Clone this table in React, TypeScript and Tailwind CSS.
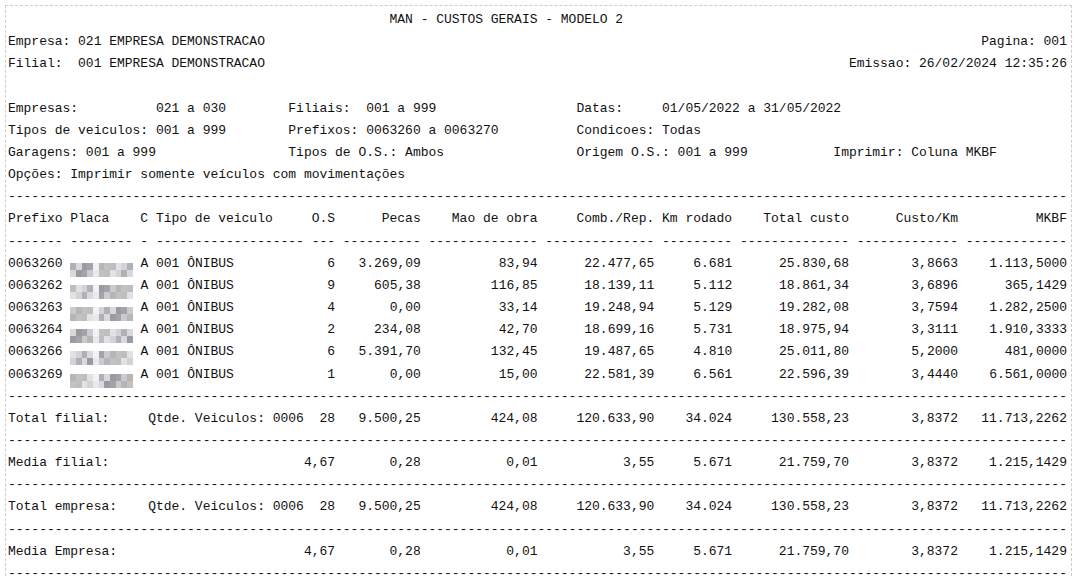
import React from 'react';

const W = 136;

const sp = (n: number) => ' '.repeat(Math.max(0, n));
const lpad = (s: string, n: number) => sp(n - s.length) + s;
const rpad = (s: string, n: number) => s + sp(n - s.length);
const dash = (n: number) => '-'.repeat(n);

// columns after O.S: pecas, mao de obra, comb./rep., km rodado, total custo, custo/km, mkbf
const rest = (v: string[]) =>
  ' ' + lpad(v[0], 10) +
  ' ' + lpad(v[1], 14) +
  ' ' + lpad(v[2], 14) +
  ' ' + lpad(v[3], 9) +
  ' ' + lpad(v[4], 14) +
  ' ' + lpad(v[5], 13) +
  ' ' + lpad(v[6], 13);

const header =
  rpad('Prefixo', 7) + ' ' + rpad('Placa', 8) + ' C ' + rpad('Tipo de veiculo', 19) + ' ' + lpad('O.S', 3) +
  rest(['Pecas', 'Mao de obra', 'Comb./Rep.', 'Km rodado', 'Total custo', 'Custo/Km', 'MKBF']);

const underline =
  dash(7) + ' ' + dash(8) + ' ' + dash(1) + ' ' + dash(19) + ' ' + dash(3) + ' ' + dash(10) + ' ' + dash(14) + ' ' +
  dash(14) + ' ' + dash(9) + ' ' + dash(14) + ' ' + dash(13) + ' ' + dash(13);

const rows = [
  { prefixo: '0063260', os: '6', v: ['3.269,09', '83,94', '22.477,65', '6.681', '25.830,68', '3,8663', '1.113,5000'] },
  { prefixo: '0063262', os: '9', v: ['605,38', '116,85', '18.139,11', '5.112', '18.861,34', '3,6896', '365,1429'] },
  { prefixo: '0063263', os: '4', v: ['0,00', '33,14', '19.248,94', '5.129', '19.282,08', '3,7594', '1.282,2500'] },
  { prefixo: '0063264', os: '2', v: ['234,08', '42,70', '18.699,16', '5.731', '18.975,94', '3,3111', '1.910,3333'] },
  { prefixo: '0063266', os: '6', v: ['5.391,70', '132,45', '19.487,65', '4.810', '25.011,80', '5,2000', '481,0000'] },
  { prefixo: '0063269', os: '1', v: ['0,00', '15,00', '22.581,39', '6.561', '22.596,39', '3,4440', '6.561,0000'] },
];

const totalVals = ['9.500,25', '424,08', '120.633,90', '34.024', '130.558,23', '3,8372', '11.713,2262'];
const mediaVals = ['0,28', '0,01', '3,55', '5.671', '21.759,70', '3,8372', '1.215,1429'];

const shades = ['#d9d9db', '#cbcbcf', '#bdbdc2', '#b0b0b6', '#a3a3aa', '#c4c2c0', '#d4d2d6', '#9a9aa2', '#b8b6b4', '#e2e2e4'];

// pixelated plate, like the blurred placeholder in the printout
function Mosaic({ seed }: { seed: number }) {
  const cells: string[] = [];
  let s = seed * 7919 + 104729;
  for (let i = 0; i < 22; i++) {
    s = (s * 9301 + 49297) % 233280;
    const col = i % 11;
    if (col === 4) {
      cells.push(i < 11 ? '#f2f2f3' : '#e9e9eb');
      continue;
    }
    cells.push(shades[s % shades.length]);
  }
  return (
    <span className="inline-grid w-[62.4px] h-[14px] grid-cols-[repeat(11,1fr)] grid-rows-2 align-[-3px] blur-[0.4px]">
      {cells.map((c, i) => (
        <span key={i} className="block" style={{ backgroundColor: c }} />
      ))}
    </span>
  );
}

function Line({ children }: { children?: React.ReactNode }) {
  return <div className="h-[22.17px] whitespace-pre">{children}</div>;
}

export default function App() {
  const params = [
    rpad(rpad('Empresas:', 19) + '021 a 030', 36) + rpad('Filiais:  001 a 999', 37) + 'Datas:     01/05/2022 a 31/05/2022',
    rpad('Tipos de veiculos: 001 a 999', 36) + rpad('Prefixos: 0063260 a 0063270', 37) + 'Condicoes: Todas',
    rpad('Garagens: 001 a 999', 36) + rpad('Tipos de O.S.: Ambos', 37) + rpad('Origem O.S.: 001 a 999', 33) + 'Imprimir: Coluna MKBF',
    'Opções: Imprimir somente veículos com movimentações',
  ];

  const totalLine = (label: string) => rpad(label, 18) + 'Qtde. Veiculos: 0006' + ' ' + lpad('28', 3) + rest(totalVals);
  const mediaLine = (label: string) => rpad(label, 38) + '4,67' + rest(mediaVals);

  return (
    <div className="min-h-screen bg-white">
      <div className="mx-[5px] mt-[5px] border border-dashed border-[#cccccc] pl-[2px] pt-[3px] text-[13px] leading-[22.17px] tracking-[-0.015px] text-[#111111] font-['Liberation_Mono','Courier_New',monospace]">
        <Line>{sp(49) + 'MAN - CUSTOS GERAIS - MODELO 2'}</Line>
        <Line>{'Empresa: 021 EMPRESA DEMONSTRACAO' + lpad('Pagina: 001', W - 33)}</Line>
        <Line>{'Filial:  001 EMPRESA DEMONSTRACAO' + lpad('Emissao: 26/02/2024 12:35:26', W - 33)}</Line>
        <Line>{' '}</Line>
        {params.map((p, i) => (
          <Line key={i}>{p}</Line>
        ))}
        <Line>{dash(W)}</Line>
        <Line>{header}</Line>
        <Line>{underline}</Line>
        {rows.map((r, i) => (
          <Line key={r.prefixo}>
            {r.prefixo + ' '}
            <Mosaic seed={i + 3} />
            {' A ' + rpad('001 ÔNIBUS', 19) + ' ' + lpad(r.os, 3) + rest(r.v)}
          </Line>
        ))}
        <Line>{dash(W)}</Line>
        <Line>{totalLine('Total filial:')}</Line>
        <Line>{dash(W)}</Line>
        <Line>{mediaLine('Media filial:')}</Line>
        <Line>{dash(W)}</Line>
        <Line>{totalLine('Total empresa:')}</Line>
        <Line>{dash(W)}</Line>
        <Line>{mediaLine('Media Empresa:')}</Line>
        <Line>{dash(W)}</Line>
      </div>
    </div>
  );
}
